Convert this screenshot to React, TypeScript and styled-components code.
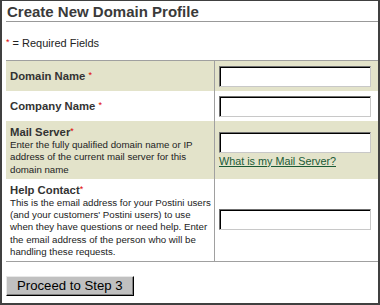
import React from "react";
import styled, { createGlobalStyle } from "styled-components";

const Global = createGlobalStyle`
  html, body { margin: 0; padding: 0; background: #fff; }
  body { font-family: "Liberation Sans", Arial, sans-serif; }
`;

const Frame = styled.div`
  width: 380px;
  height: 305px;
  box-sizing: border-box;
  border-style: solid;
  border-color: #404040;
  border-width: 1px 2px 2px 2px;
  padding-left: 4px;
  display: flex;
  flex-direction: column;
  overflow: hidden;
`;

const Title = styled.h1`
  margin: 0;
  padding: 2px 0 1px 1px;
  font-size: 15px;
  line-height: 17px;
  font-weight: bold;
  color: #3a3a3a;
  border-bottom: 1px solid #999;
`;

const Legend = styled.div`
  margin: 14px 0 10px 0;
  font-size: 11px;
  line-height: 13px;
  color: #222;
`;

const Req = styled.span`
  color: #e00000;
  font-size: 9px;
  font-weight: normal;
  vertical-align: 2px;
`;

const Table = styled.div`
  border-top: 1px solid #a0a0a0;
  border-bottom: 1px solid #a0a0a0;
  display: flex;
  flex-direction: column;
`;

const Row = styled.div<{ $shaded?: boolean }>`
  display: grid;
  grid-template-columns: 209px 1fr;
  background: ${(p) => (p.$shaded ? "#e3e3ca" : "#fff")};
  min-height: 30px;
`;

const LabelCell = styled.div<{ $top?: boolean }>`
  border-right: 1px solid #a0a0a0;
  padding: ${(p) => (p.$top ? "4px 4px 3px 4px" : "0 4px")};
  display: flex;
  flex-direction: column;
  justify-content: ${(p) => (p.$top ? "flex-start" : "center")};
`;

const Label = styled.div`
  font-size: 11.3px;
  line-height: 13px;
  font-weight: bold;
  color: #333;
`;

const Desc = styled.div`
  font-size: 9.7px;
  line-height: 12.25px;
  color: #222;
  white-space: nowrap;
`;

const FieldCell = styled.div`
  padding: 0 4px;
  display: flex;
  flex-direction: column;
  justify-content: center;
  align-items: flex-start;
`;

const Input = styled.input`
  width: 152px;
  height: 21px;
  box-sizing: border-box;
  margin: 0;
  padding: 0 3px;
  background: #fff;
  border-style: solid;
  border-width: 1px;
  border-color: #6f6f6f #c8c8c8 #c8c8c8 #6f6f6f;
  box-shadow: inset 1px 1px 0 #000;
  font-family: "Liberation Sans", Arial, sans-serif;
  font-size: 11px;
  outline: none;
`;

const HelpLink = styled.a`
  margin-top: 2px;
  font-size: 10.8px;
  line-height: 13px;
  color: #1a5a36;
  text-decoration: underline;
  cursor: pointer;
`;

const ButtonBar = styled.div`
  margin-top: 14px;
`;

const Button = styled.button`
  height: 20px;
  padding: 0 10px;
  margin: 0;
  background: #c0c0c0;
  font-family: "Liberation Sans", Arial, sans-serif;
  font-size: 13.2px;
  line-height: 16px;
  color: #000;
  border-style: solid;
  border-width: 1px;
  border-color: #e8e8e8 #000 #000 #e8e8e8;
  box-shadow: inset -1px -1px 0 #808080;
  cursor: pointer;
`;

export default function App() {
  return (
    <>
      <Global />
      <Frame>
        <Title>Create New Domain Profile</Title>
        <Legend>
          <Req>*</Req> = Required Fields
        </Legend>
        <Table>
          <Row $shaded>
            <LabelCell>
              <Label>
                Domain Name <Req>*</Req>
              </Label>
            </LabelCell>
            <FieldCell>
              <Input type="text" />
            </FieldCell>
          </Row>
          <Row>
            <LabelCell>
              <Label>
                Company Name <Req>*</Req>
              </Label>
            </LabelCell>
            <FieldCell>
              <Input type="text" />
            </FieldCell>
          </Row>
          <Row $shaded>
            <LabelCell $top>
              <Label>
                Mail Server<Req>*</Req>
              </Label>
              <Desc>
                Enter the fully qualified domain name or IP
                <br />
                address of the current mail server for this
                <br />
                domain name
              </Desc>
            </LabelCell>
            <FieldCell>
              <Input type="text" />
              <HelpLink>What is my Mail Server?</HelpLink>
            </FieldCell>
          </Row>
          <Row>
            <LabelCell $top>
              <Label>
                Help Contact<Req>*</Req>
              </Label>
              <Desc>
                This is the email address for your Postini users
                <br />
                (and your customers' Postini users) to use
                <br />
                when they have questions or need help. Enter
                <br />
                the email address of the person who will be
                <br />
                handling these requests.
              </Desc>
            </LabelCell>
            <FieldCell>
              <Input type="text" />
            </FieldCell>
          </Row>
        </Table>
        <ButtonBar>
          <Button type="button">Proceed to Step 3</Button>
        </ButtonBar>
      </Frame>
    </>
  );
}
